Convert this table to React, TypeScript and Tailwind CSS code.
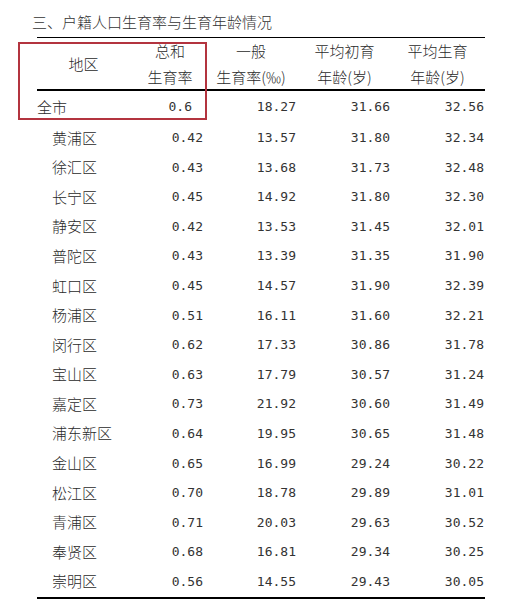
const rows: [string, string, string, string, string][] = [
  ["黄浦区", "0.42", "13.57", "31.80", "32.34"],
  ["徐汇区", "0.43", "13.68", "31.73", "32.48"],
  ["长宁区", "0.45", "14.92", "31.80", "32.30"],
  ["静安区", "0.42", "13.53", "31.45", "32.01"],
  ["普陀区", "0.43", "13.39", "31.35", "31.90"],
  ["虹口区", "0.45", "14.57", "31.90", "32.39"],
  ["杨浦区", "0.51", "16.11", "31.60", "32.21"],
  ["闵行区", "0.62", "17.33", "30.86", "31.78"],
  ["宝山区", "0.63", "17.79", "30.57", "31.24"],
  ["嘉定区", "0.73", "21.92", "30.60", "31.49"],
  ["浦东新区", "0.64", "19.95", "30.65", "31.48"],
  ["金山区", "0.65", "16.99", "29.24", "30.22"],
  ["松江区", "0.70", "18.78", "29.89", "31.01"],
  ["青浦区", "0.71", "20.03", "29.63", "30.52"],
  ["奉贤区", "0.68", "16.81", "29.34", "30.25"],
  ["崇明区", "0.56", "14.55", "29.43", "30.05"],
];

const cols = "grid grid-cols-[93px_80px_90px_95px_90px]";
// numbers in the source are half-width monospace digits
const num = "text-right font-['DejaVu_Sans_Mono',monospace] text-[13px] font-normal text-[#333]";

export default function App() {
  return (
    <div
      className="relative w-[524px] h-[610px] bg-white text-[#2a2a2a] text-[15px] font-light"
      style={{ fontFamily: '"Noto Sans CJK SC", "Noto Sans", sans-serif' }}
    >
      {/* title */}
      <div className="h-[37px] pt-[12px] pl-[32px] leading-[20px] text-[#333]">
        三、户籍人口生育率与生育年龄情况
      </div>

      <div className="ml-[37px] w-[448px]">
        {/* header */}
        <div className={`${cols} border-t border-black border-b-2 h-[54px] leading-[26px] items-center`}>
          <div className="text-center">地区</div>
          <div className="text-center">
            <div>总和</div>
            <div>生育率</div>
          </div>
          <div className="text-center pr-2">
            <div>一般</div>
            <div>生育率(‰)</div>
          </div>
          <div className="text-center pr-[6px]">
            <div>平均初育</div>
            <div>年龄(岁)</div>
          </div>
          <div className="text-center pr-[5px]">
            <div>平均生育</div>
            <div>年龄(岁)</div>
          </div>
        </div>

        {/* whole city */}
        <div className={`${cols} h-[32px] items-center`}>
          <div>全市</div>
          <div className={`${num} pr-[18px]`}>0.6</div>
          <div className={`${num} pr-[4px]`}>18.27</div>
          <div className={`${num} pr-[5px]`}>31.66</div>
          <div className={`${num} pr-[1px]`}>32.56</div>
        </div>

        {rows.map((r) => (
          <div key={r[0]} className={`${cols} h-[29.6px] items-center`}>
            <div className="pl-[15px]">{r[0]}</div>
            <div className={`${num} pr-[7px]`}>{r[1]}</div>
            <div className={`${num} pr-[4px]`}>{r[2]}</div>
            <div className={`${num} pr-[5px]`}>{r[3]}</div>
            <div className={`${num} pr-[1px]`}>{r[4]}</div>
          </div>
        ))}

        <div className="h-[2px] bg-black" />
      </div>

      {/* red highlight box */}
      <div className="absolute left-[18px] top-[42px] w-[189px] h-[78px] border-[2.5px] border-[#b3343f]" />
    </div>
  );
}
